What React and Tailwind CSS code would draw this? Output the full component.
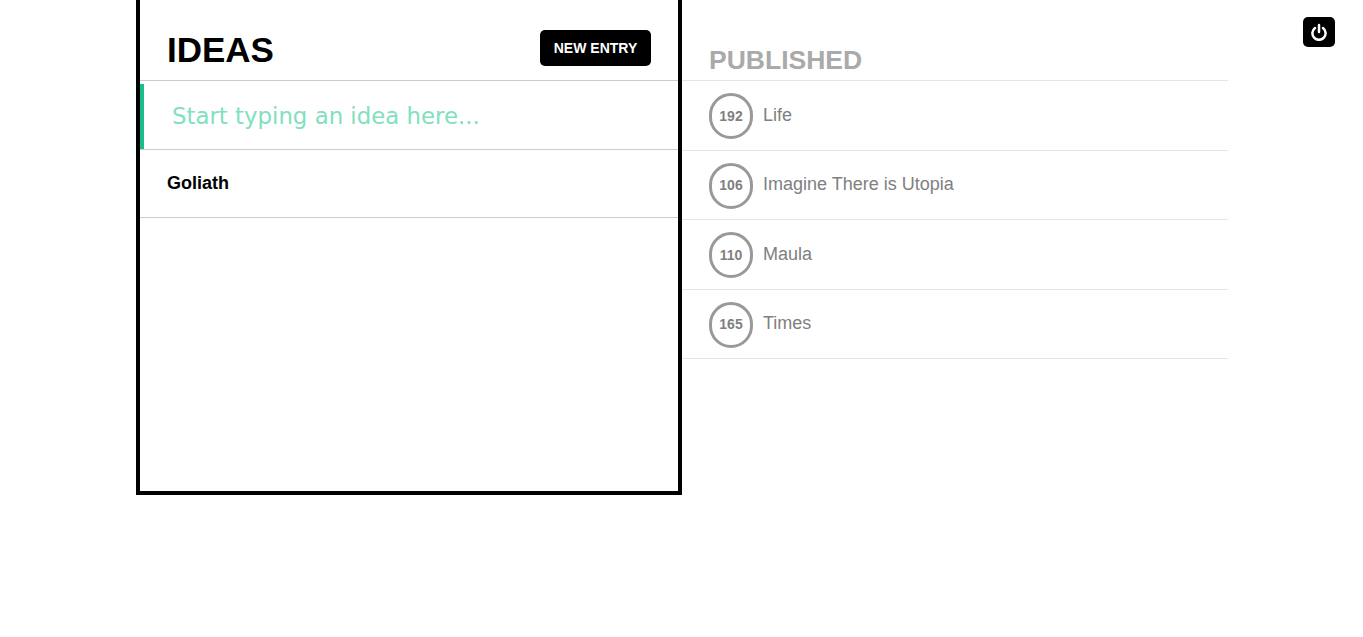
const published = [
  { id: 1, count: 192, title: "Life" },
  { id: 2, count: 106, title: "Imagine There is Utopia" },
  { id: 3, count: 110, title: "Maula" },
  { id: 4, count: 165, title: "Times" },
];

function PowerIcon() {
  return (
    <svg width="18" height="18" viewBox="0 0 18 18" fill="none" stroke="white" strokeWidth="2.5" strokeLinecap="round">
      <path d="M9 2v7" />
      <path d="M5 5a6.6 6.6 0 1 0 8 0" />
    </svg>
  );
}

export default function App() {
  return (
    <div className="relative h-[637px] bg-white font-['Liberation_Sans',Arial,sans-serif]">
      <button className="absolute left-[1303px] top-[17px] flex h-[30px] w-[32px] items-center justify-center rounded-[5px] bg-black">
        <PowerIcon />
      </button>

      <div className="ml-[136px] flex w-[1092px]">
        {/* ideas */}
        <div className="h-[495px] w-[546px] border-x-4 border-b-4 border-black">
          <div className="flex h-[81px] items-start justify-between border-b border-[#ccc] pl-[27px] pr-[27px]">
            <h1 className="mt-[30px] text-[35px] leading-[40px] font-bold text-black">IDEAS</h1>
            <button className="mt-[30px] h-[36px] w-[111px] rounded-[5px] bg-black text-[14px] font-bold text-white">
              NEW ENTRY
            </button>
          </div>
          <div className="mt-[3px] h-[66px] border-b border-[#ccc]">
            <div className="flex h-[65px] w-full items-center border-l-4 border-[#1abc8c] pb-[1px] pl-[28px]">
              <input
                placeholder="Start typing an idea here..."
                className="w-full bg-transparent font-['DejaVu_Sans',sans-serif] text-[22.85px] text-[#82e0bd] outline-none placeholder:text-[#82e0bd]"
              />
            </div>
          </div>
          <div className="flex h-[68px] items-center border-b border-[#ccc] pl-[27px] text-[18px] font-bold text-black">
            Goliath
          </div>
        </div>

        {/* published */}
        <div className="w-[546px]">
          <div className="flex h-[81px] items-start border-b border-[#e5e5e5] pl-[27px]">
            <h2 className="mt-[44px] text-[26.5px] leading-[32px] font-bold text-[#aaa]">PUBLISHED</h2>
          </div>
          {published.map((item) => (
            <div key={item.id} className="flex h-[69.5px] items-center gap-[10px] border-b border-[#e5e5e5] pl-[27px] pt-[2px]">
              <div className="flex h-[46px] w-[44px] items-center justify-center rounded-full border-[3px] border-[#999] text-[14px] font-bold text-[#808080]">
                {item.count}
              </div>
              <span className="-mt-[2px] text-[18px] text-[#808080]">{item.title}</span>
            </div>
          ))}
        </div>
      </div>
    </div>
  );
}
